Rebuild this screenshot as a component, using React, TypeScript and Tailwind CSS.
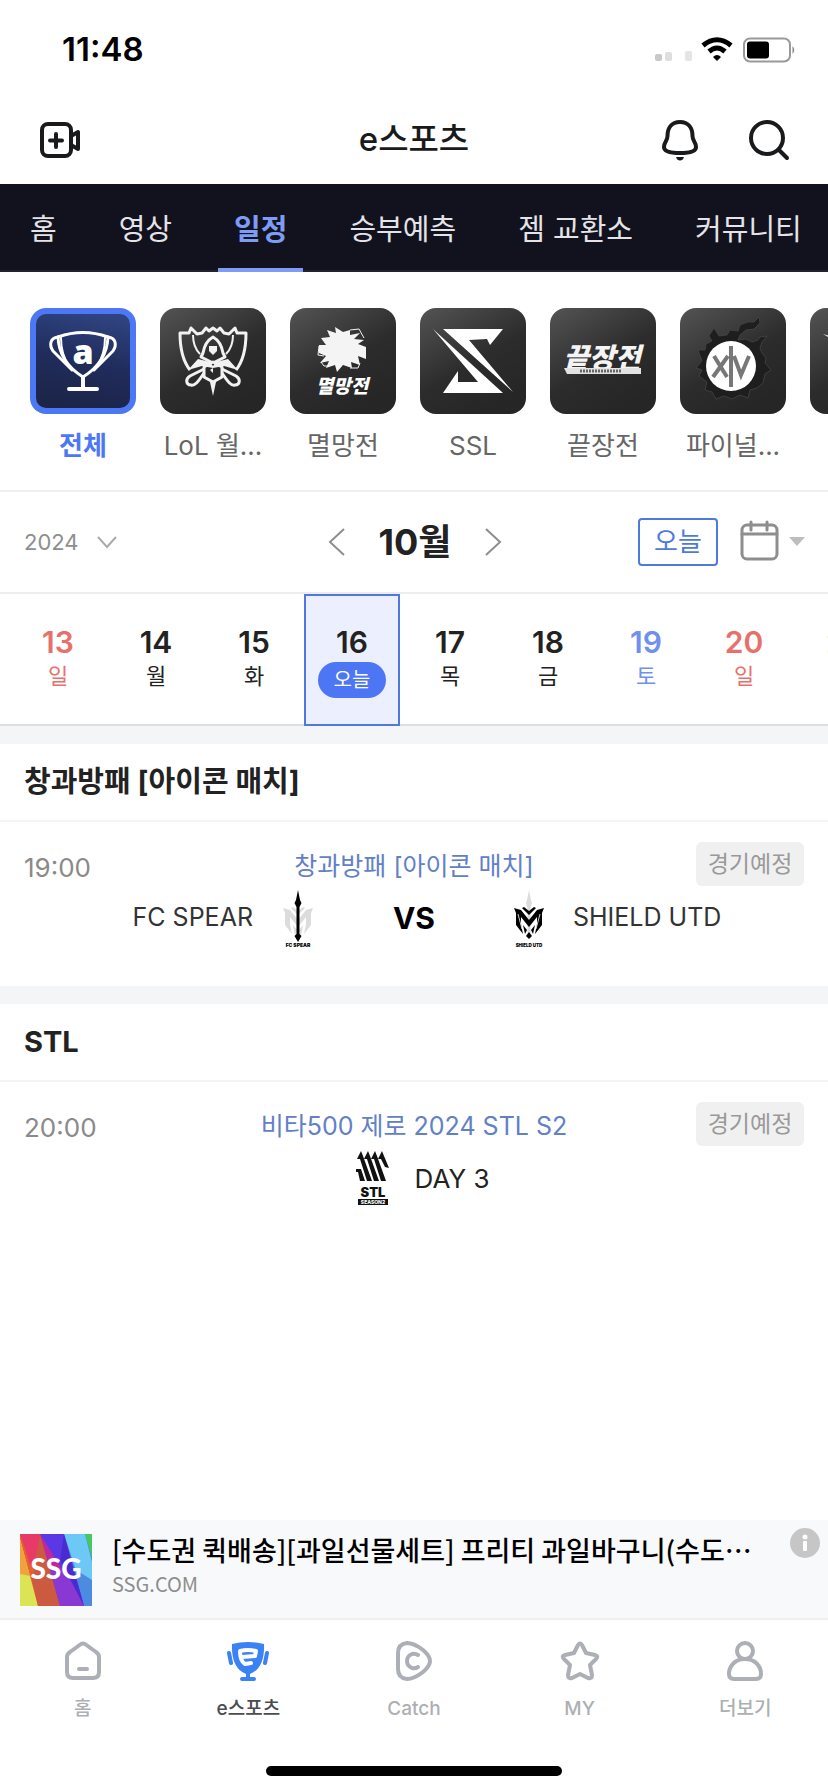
import React from 'react'

const Tile = ({ children, active = false }: { children?: React.ReactNode; active?: boolean }) => (
  <svg
    viewBox="0 0 106 106"
    className="w-[106px] h-[106px] shrink-0 rounded-2xl"
    fill="none"
    aria-hidden="true"
  >
    <defs>
      <linearGradient id="tileDark" x1="0" y1="0" x2="0.6" y2="1">
        <stop offset="0" stopColor="#545454" />
        <stop offset="0.6" stopColor="#2c2c2c" />
        <stop offset="1" stopColor="#262626" />
      </linearGradient>
      <linearGradient id="tileNavy" x1="0.6" y1="0" x2="0.4" y2="1">
        <stop offset="0" stopColor="#2f4380" />
        <stop offset="0.5" stopColor="#202c5c" />
        <stop offset="1" stopColor="#1c2448" />
      </linearGradient>
    </defs>
    {active ? (
      <>
        <rect width="106" height="106" fill="#4d78f5" />
        <rect x="6" y="6" width="94" height="94" rx="10" fill="url(#tileNavy)" />
      </>
    ) : (
      <rect width="106" height="106" fill="url(#tileDark)" />
    )}
    {children}
  </svg>
)

const AllLogo = () => (
  <Tile active>
    <g stroke="#fff" strokeWidth="3" strokeLinecap="round" strokeLinejoin="round">
      <path d="M28 29Q53 20 78 29Q77 54 53 69Q29 54 28 29Z" />
      <path d="M28 29C20 30 19 37 23 43L42 62M78 29C86 30 87 37 83 43L64 62" />
      <path d="M31 30Q31 46 39 58M75 30Q75 46 67 58" strokeWidth="2" />
      <path d="M53 69V81M39 81H67" strokeWidth="4" />
    </g>
    <text x="53" y="56" textAnchor="middle" fontFamily="Open Sans, sans-serif" fontWeight="800" fontSize="34" fill="#fff">
      a
    </text>
  </Tile>
)

const WorldsLogo = () => (
  <Tile>
    <g stroke="#f2f2f2" strokeWidth="2" strokeLinejoin="round">
      <path d="M30 62C22 52 20 38 20 25H29L31 20L37 26L42 25L46 20L49 23L53 20L57 23L60 20L64 25L69 26L75 20L77 25H86C86 38 84 52 76 62" strokeWidth="3" />
      <path d="M33 27C33 36 36 42 40 46M73 27C73 36 70 42 66 46" />
      <path d="M53 29C46 33 44 39 43 45L41 49L53 55L65 49L63 45C62 39 60 33 53 29Z" strokeWidth="3" />
      <path d="M50 58L30 68C25 71 26 77 31 77C35 78 38 74 44 65M56 58L76 68C81 71 80 77 75 77C71 78 68 74 62 65" strokeWidth="3" />
      <path d="M53 54L62 59V69L53 74L44 69V59Z" fill="#2b2b2b" strokeWidth="3" />
    </g>
    <path d="M49 38H57V43L53 47L49 43ZM28 62L38 51L50 54L53 58L56 54L68 51L78 62L64 58L53 60L42 58ZM53 60L50 62L53 65ZM50 74H56L53 88Z" fill="#f2f2f2" />
  </Tile>
)

const MyeolmangLogo = () => (
  <Tile>
    <path
      d="M45 19L53 24L60 22L60 27L70 25L64 31L74 32L68 36L76 39L76 51L68 48L70 57L61 54L62 60L53 57L47 64L45 57L36 60L39 53L30 55L36 48L29 45V37L36 37L31 30L40 29L37 22L46 25Z"
      fill="#f4f4f4"
    />
    <path d="M60 22L69 21L74 30M29 38L28 47L34 48M31 54L34 58L39 58M60 60L68 60L70 55" stroke="#f4f4f4" strokeWidth="1" />
    <text x="52" y="85" textAnchor="middle" fontFamily="Noto Sans CJK KR, sans-serif" fontWeight="900" fontStyle="italic" fontSize="19" fill="#fff">
      멸망전
    </text>
  </Tile>
)

const SslLogo = () => (
  <Tile>
    <path d="M23 21H83L70 37L67 31L49 32L93 84Z" fill="#fff" />
    <path d="M13 21L83 85H23L38 63V74H58Z" fill="#fff" />
  </Tile>
)

const KkeutjangLogo = () => (
  <Tile>
    <text x="52" y="60" textAnchor="middle" fontFamily="Noto Sans CJK KR, sans-serif" fontWeight="900" fontStyle="italic" fontSize="28" fill="#f4f4f4">
      끝장전
    </text>
    <path d="M14 60H91V66H17Z" fill="#e2e2e2" />
    <path d="M30 63H72" stroke="#666" strokeWidth="3" strokeDasharray="2 1" />
  </Tile>
)

const FinalLogo = () => (
  <Tile>
    <path
      d="M34 20L39 28L47 27L50 22L58 23L60 17L68 14L74 14L79 9L80 15L74 21L66 22L60 27L58 32L66 31L72 34L78 32L80 29L87 28L82 34L80 40L82 45L86 50L85 55L91 62L85 66L83 75L77 80L70 82L68 90L60 87L52 91L44 88L36 91L32 84L25 82L27 74L19 68L22 62L16 60L22 53L18 42L25 42L26 36L32 33L29 28Z"
      fill="#1e1e1e"
      stroke="#4a4a4a"
      strokeWidth="0.7"
    />
    <circle cx="51" cy="58" r="25" fill="#fff" />
    <path d="M34 48L47 69M48 48L33 69M54 48L61 67L69 48" stroke="#777" strokeWidth="4" />
    <path d="M51 38V79" stroke="#777" strokeWidth="4" />
  </Tile>
)

const NextLogo = () => (
  <Tile>
    <path d="M13 26L40 34L30 36Z" fill="#eee" />
  </Tile>
)

const crestPath =
  'M0 20L7 22L15 32L23 22L30 20L28 25V37L21 46L23 36V29L15 39L7 29V36L9 46L2 37V25Z'

const SpearLogo = () => (
  <svg viewBox="0 0 32 60" className="w-8 h-15 shrink-0" aria-hidden="true">
    <path d={crestPath} fill="#dcdcdc" />
    <path d="M8 20L15 27L22 20L20 19L15 23L10 19ZM10 37L12 48L14 42ZM20 37L18 48L16 42Z" fill="#dcdcdc" />
    <path d="M15 2L17 12L18.500 15L16.500 19V46L18.500 48L15 54L11.500 48L13.500 46V19L11.500 15L13 12Z" fill="#000" />
    <text x="15" y="59" textAnchor="middle" fontFamily="Inter, sans-serif" fontWeight="900" fontSize="5">
      FC SPEAR
    </text>
  </svg>
)

const ShieldLogo = () => (
  <svg viewBox="0 0 32 60" className="w-8 h-15 shrink-0" aria-hidden="true">
    <path d="M16 2L18 12L19 15L17.500 20V48H14.500V20L13 15L14 12Z" fill="#dcdcdc" />
    <g transform="translate(1 0)">
      <path d={crestPath} fill="#000" />
      <path d="M8 20L15 27L22 20L20 19L15 23L10 19ZM9 37L11 46L13 42ZM21 37L19 46L17 42Z" fill="#000" />
      <path d="M4 26L8 41M26 26L22 41" stroke="#fff" strokeWidth="0.800" />
      <path d="M15 44L18 48L15 51L12 48Z" fill="#000" />
      <text x="15" y="59" textAnchor="middle" fontFamily="Inter, sans-serif" fontWeight="900" fontSize="4.500">
        SHIELD UTD
      </text>
    </g>
  </svg>
)

const StlLogo = () => (
  <svg viewBox="0 0 36 56" className="w-9 h-14 shrink-0" aria-hidden="true">
    <path
      d="M2 9L6 1L8 6L17 31H12L5 9ZM9 9L13 1L15 6L24 31H19L12 9ZM16 9L20 1L22 6L31 31H26L19 9ZM23 9L27 1L29 6L34 18L30 17L26 9ZM1 19H6L10 31H5L3 22H1Z"
      fill="#111"
    />
    <text x="18" y="47" textAnchor="middle" fontFamily="Inter, sans-serif" fontWeight="900" fontSize="13" fill="#111">
      STL
    </text>
    <rect x="3" y="49" width="30" height="6" fill="#111" />
    <text x="18" y="54" textAnchor="middle" fontFamily="Inter, sans-serif" fontWeight="800" fontSize="5" fill="#fff">
      SEASON2
    </text>
  </svg>
)

const tabs = ['홈', '영상', '일정', '승부예측', '젬 교환소', '커뮤니티']

const leagues = [
  { name: '전체', logo: AllLogo },
  { name: 'LoL 월...', logo: WorldsLogo },
  { name: '멸망전', logo: MyeolmangLogo },
  { name: 'SSL', logo: SslLogo },
  { name: '끝장전', logo: KkeutjangLogo },
  { name: '파이널...', logo: FinalLogo },
  { name: '', logo: NextLogo }
]

const days = [
  { date: 13, day: '일', color: 'text-[#e8706c]' },
  { date: 14, day: '월', color: 'text-[#222]' },
  { date: 15, day: '화', color: 'text-[#222]' },
  { date: 16, day: '오늘', color: 'text-[#222]', today: true },
  { date: 17, day: '목', color: 'text-[#222]' },
  { date: 18, day: '금', color: 'text-[#222]' },
  { date: 19, day: '토', color: 'text-[#7090ee]' },
  { date: 20, day: '일', color: 'text-[#e8706c]' },
  { date: 21, day: '월', color: 'text-[#222]' }
]

const StatusBar = () => (
  <div className="flex items-center justify-between h-[100px] pl-[62px] pr-8">
    <span className="text-[33px] font-semibold text-black">11:48</span>
    <svg viewBox="0 0 142 28" className="w-[142px] h-7" aria-hidden="true">
      <rect x="1" y="18" width="7" height="7" rx="2" fill="#c9c9c9" />
      <rect x="11" y="16" width="7" height="9" rx="2" fill="#dedede" />
      <rect x="31" y="15" width="7" height="10" rx="2" fill="#e4e4e4" />
      <g fill="none" stroke="#000" strokeWidth="5">
        <path d="M49 9.500Q63 -2 77 9.500" />
        <path d="M55 15.500Q63 8.500 71 15.500" />
      </g>
      <path d="M59 21Q63 17 67 21L63 25Z" />
      <rect x="90" y="2.500" width="46" height="23" rx="6" fill="none" stroke="#999" strokeWidth="2" />
      <rect x="93" y="5.500" width="22" height="17" rx="3" />
      <path d="M138.500 10Q142 14 138.500 18Z" fill="#888" />
    </svg>
  </div>
)

const Header = () => (
  <header className="grid grid-cols-3 items-center h-[84px] px-9 pb-1 text-[#191a1c]">
    <button aria-label="방송하기" className="justify-self-start">
      <svg viewBox="0 0 48 40" className="w-12 h-10" fill="none" stroke="currentColor" strokeWidth="4" strokeLinecap="round" strokeLinejoin="round">
        <rect x="6" y="4" width="29" height="32" rx="6" />
        <path d="M20 14V27M14 20.500H26" />
        <path d="M35 16L42 12V29L35 25" />
      </svg>
    </button>
    <h1 className="justify-self-center text-[33px] font-medium">e스포츠</h1>
    <div className="flex justify-self-end gap-10">
      <button aria-label="알림">
        <svg viewBox="0 0 48 44" className="w-12 h-11" fill="none" stroke="currentColor" strokeWidth="4" strokeLinejoin="round">
          <path d="M24 4C15.500 4 11.500 10 11.500 18C11.500 23 8 24 8 29C8 33 12 35 24 35C36 35 40 33 40 29C40 24 36.500 23 36.500 18C36.500 10 32.500 4 24 4Z" />
          <path d="M20 39H28Q27 42.500 24 42.500T20 39Z" fill="currentColor" stroke="none" />
        </svg>
      </button>
      <button aria-label="검색">
        <svg viewBox="0 0 48 44" className="w-12 h-11" fill="none" stroke="currentColor" strokeWidth="4" strokeLinecap="round">
          <circle cx="23" cy="20" r="16" />
          <path d="M35 32L43 40" />
        </svg>
      </button>
    </div>
  </header>
)

const MonthBar = () => (
  <div className="grid grid-cols-3 items-center h-[102px] pl-6 pr-[22px] border-t-2 border-[#efefef]">
    <button className="flex items-center gap-4 text-[22px] text-[#8e8e8e]">
      2024
      <svg viewBox="0 0 24 16" className="w-6 h-4" fill="none" stroke="#aaa" strokeWidth="2">
        <path d="M3 3L12 13L21 3" />
      </svg>
    </button>
    <div className="flex items-center justify-center gap-[30px] text-[#8e8e8e]">
      <button aria-label="이전 달">
        <svg viewBox="0 0 24 32" className="w-6 h-8" fill="none" stroke="currentColor" strokeWidth="2">
          <path d="M19 3L5 16L19 29" />
        </svg>
      </button>
      <span className="text-[36px] font-bold text-[#222]">10월</span>
      <button aria-label="다음 달">
        <svg viewBox="0 0 24 32" className="w-6 h-8" fill="none" stroke="currentColor" strokeWidth="2">
          <path d="M5 3L19 16L5 29" />
        </svg>
      </button>
    </div>
    <div className="flex items-center justify-end gap-[22px]">
      <button className="w-20 h-12 rounded-sm border-2 border-[#5079e0] text-[26px] leading-none text-[#5079e0]">오늘</button>
      <button aria-label="달력" className="flex items-center gap-2">
        <svg viewBox="0 0 40 44" className="w-10 h-11" fill="none" stroke="#8e8e8e" strokeWidth="3" strokeLinecap="round">
          <rect x="2" y="5" width="35" height="34" rx="5" />
          <path d="M2 14H37M11 2V10M27 2V10" />
        </svg>
        <svg viewBox="0 0 18 10" className="w-[18px] h-[10px]" fill="#bdbdbd">
          <path d="M1 0H17L9 9Z" />
        </svg>
      </button>
    </div>
  </div>
)

const DayStrip = () => (
  <div className="flex gap-[2px] h-[134px] pl-[10px] border-y-2 border-t-[#ececec] border-b-[#dcdfdf] overflow-x-clip">
    {days.map((d) => (
      <button
        key={d.date}
        className={`flex flex-col items-center w-24 shrink-0 pt-7 -mb-[2px] ${d.color} ${d.today ? 'bg-[#ecf0fe] outline-2 -outline-offset-2 outline-[#5079e0]' : ''}`}
      >
        <span className="text-[30px] leading-10 font-semibold">{d.date}</span>
        {d.today ? (
          <span className="flex items-center justify-center w-[68px] h-9 rounded-full bg-[#4d76f5] text-xl text-white">
            {d.day}
          </span>
        ) : (
          <span className="text-[22px] leading-7">{d.day}</span>
        )}
      </button>
    ))}
  </div>
)

type MatchSectionProps = {
  title: string
  time: string
  event: string
  children: React.ReactNode
}

const MatchSection = ({ title, time, event, children }: MatchSectionProps) => (
  <section>
    <div className="h-[18px] bg-[#f3f5f6]" />
    <h2 className="flex items-center h-[78px] px-6 border-b-2 border-[#f3f4f4] text-[29px] font-bold text-[#222]">{title}</h2>
    <div className="px-6 pt-5 pb-[38px]">
      <div className="grid grid-cols-[1fr_auto_1fr] items-center h-[46px]">
        <time className="pt-1 text-[26px] text-[#8a8a8a]">{time}</time>
        <a href="#" className="pt-1 text-[25px] text-[#6280c6]">{event}</a>
        <span className="flex items-center justify-center self-start justify-self-end w-[108px] h-11 rounded-md bg-[#f0f0f0] text-[23px] text-[#999]">
          경기예정
        </span>
      </div>
      {children}
    </div>
  </section>
)

const SsgBanner = () => (
  <aside className="flex h-[98px] pt-[14px] pl-5 bg-[#f8f9fb]">
    <svg viewBox="0 0 72 72" className="w-[72px] h-[72px] shrink-0" aria-hidden="true">
      <rect width="72" height="72" fill="#5a38e6" />
      <path d="M0 0H20L40 72H0Z" fill="#e8602e" />
      <path d="M0 0H20L26 42L10 30Z" fill="#e83a66" />
      <path d="M0 5L18 72H0Z" fill="#dbe455" />
      <path d="M0 5L10 42L0 40Z" fill="#f0a23c" />
      <path d="M20 0L40 72H18L12 46Z" fill="#cb5a40" />
      <path d="M20 0L48 45L40 72Z" fill="#c0289a" />
      <path d="M30 36L52 36L64 72H40Z" fill="#8a38d4" />
      <path d="M44 0H72V72H64Z" fill="#4b8be0" />
      <path d="M44 0H65L72 28V46L56 36Z" fill="#6cc8f4" />
      <path d="M44 0L64 72L40 26Z" fill="#4a2bd0" />
      <path d="M65 0H72V24Z" fill="#48c85e" />
      <text x="36" y="45" textAnchor="middle" fontFamily="Lato, sans-serif" fontWeight="900" fontSize="28" fill="#fff">
        SSG
      </text>
    </svg>
    <a href="#" className="flex-1 min-w-0 pl-5 -mt-[2px] font-['Noto_Sans_CJK_KR',sans-serif]">
      <p className="text-[27px] leading-9 font-medium text-black whitespace-nowrap">
        [수도권 퀵배송][과일선물세트] 프리티 과일바구니(수도⋯
      </p>
      <p className="text-xl leading-8 text-[#8d8d8d]">SSG.COM</p>
    </a>
    <button aria-label="광고 정보" className="self-start -mt-[6px] mr-2">
      <svg viewBox="0 0 30 30" className="w-[30px] h-[30px]">
        <circle cx="15" cy="15" r="15" fill="#c6c6c6" />
        <circle cx="15" cy="9" r="2.500" fill="#fff" />
        <rect x="13" y="13" width="4" height="10" rx="1" fill="#fff" />
      </svg>
    </button>
  </aside>
)

const bottomItems = [
  {
    label: '홈',
    icon: (
      <>
        <path d="M20 4Q22 3 24 4L35 12Q38 14 38 17V32Q38 38 32 38H12Q6 38 6 32V17Q6 14 9 12Z" />
        <path d="M18 29H26" />
      </>
    )
  },
  {
    label: 'e스포츠',
    active: true,
    icon: (
      <>
        <path d="M6 4Q22 0 38 4Q39 28 24 34V37H28Q30 37 30 39T28 41H16Q14 41 14 39T16 37H20V34Q5 28 6 4Z" fill="currentColor" stroke="none" />
        <path d="M3 13L5 23M41 13L39 23" />
        <path d="M16 17L29 16L30 11Q22 9 14 11Q14 21 19 24L25 23" stroke="#fff" strokeWidth="4" strokeLinejoin="round" />
      </>
    )
  },
  {
    label: 'Catch',
    icon: (
      <>
        <path d="M6 13Q6 4 15 3Q22 3 31 10Q38 16 38 21T31 32Q22 39 15 39Q6 38 6 29Z" />
        <path d="M26 15Q23 13 20 14Q15 16 15 21T20 28Q23 29 26 27" />
      </>
    )
  },
  {
    label: 'MY',
    icon: (
      <path d="M20 5Q22 2 24 5L28 13L37 15Q41 16 38 19L32 25L34 35Q34 39 30 38L22 34L14 38Q10 39 10 35L12 25L6 19Q3 16 7 15L16 13Z" />
    )
  },
  {
    label: '더보기',
    icon: (
      <>
        <circle cx="22" cy="11" r="8" />
        <path d="M22 19C11 19 6 27 6 34Q6 39 11 39H33Q38 39 38 34C38 27 33 19 22 19Z" />
      </>
    )
  }
]

const BottomNav = () => (
  <nav className="border-t-2 border-[#eeeff0]">
    <div className="grid grid-cols-5">
      {bottomItems.map((item) => (
        <a key={item.label} href="#" className="flex flex-col items-center gap-[11px] pt-5">
          <svg
            viewBox="0 0 44 44"
            className={`w-11 h-11 ${item.active ? 'text-[#3b82f6]' : 'text-[#adafb7]'}`}
            fill="none"
            stroke="currentColor"
            strokeWidth="4"
            strokeLinecap="round"
            strokeLinejoin="round"
            aria-hidden="true"
          >
            {item.icon}
          </svg>
          <span className={`text-[19px] leading-7 font-medium ${item.active ? 'text-[#4a4c50]' : 'text-[#adafb3]'}`}>{item.label}</span>
        </a>
      ))}
    </div>
    <div className="w-[296px] h-[10px] mx-auto mt-[43px] mb-4 rounded-full bg-black" />
  </nav>
)

const App = () => {
  return (
    <div className="flex flex-col min-h-screen overflow-x-clip bg-white font-['Inter','Noto_Sans_CJK_KR',sans-serif]">
      <StatusBar />
      <Header />

      {/* Category tabs */}
      <nav className="flex gap-[30px] h-[88px] pl-[14px] bg-[#12121e] border-b-2 border-[#22232c] overflow-x-clip">
        {tabs.map((tab) => (
          <a
            key={tab}
            href="#"
            className={`flex items-center shrink-0 px-4 pt-2 text-[29px] border-b-4 -mb-[2px] ${tab === '일정' ? 'font-bold text-[#7e9bf5] border-[#7e9bf5]' : 'font-normal text-[#e4e4e8] border-transparent'}`}
          >
            {tab}
          </a>
        ))}
      </nav>

      {/* Leagues */}
      <div className="flex gap-6 pt-9 pb-6 pl-[30px] overflow-x-clip">
        {leagues.map((league, index) => {
          const Logo = league.logo
          return (
            <button key={index} className="flex flex-col items-center w-[106px] h-[158px] shrink-0 gap-3">
              <Logo />
              <span className={`text-[26px] leading-10 whitespace-nowrap ${index === 0 ? 'font-bold text-[#4d78f5]' : 'text-[#666]'}`}>
                {league.name}
              </span>
            </button>
          )
        })}
      </div>

      <MonthBar />
      <DayStrip />

      <main className="flex-1">
        <MatchSection title="창과방패 [아이콘 매치]" time="19:00" event="창과방패 [아이콘 매치]">
          <div className="flex items-center h-15 text-[25px] text-[#333]">
            <div className="flex flex-1 items-center justify-end gap-[30px]">
              FC SPEAR
              <SpearLogo />
            </div>
            <strong className="w-[198px] text-center text-[30px] font-bold text-black">VS</strong>
            <div className="flex flex-1 items-center gap-7">
              <ShieldLogo />
              SHIELD UTD
            </div>
          </div>
        </MatchSection>

        <MatchSection title="STL" time="20:00" event="비타500 제로 2024 STL S2">
          <div className="flex items-center justify-center gap-6 h-15 pl-4 text-[26px] text-[#222]">
            <StlLogo />
            DAY 3
          </div>
        </MatchSection>
      </main>

      <SsgBanner />
      <BottomNav />
    </div>
  )
}

export default App
